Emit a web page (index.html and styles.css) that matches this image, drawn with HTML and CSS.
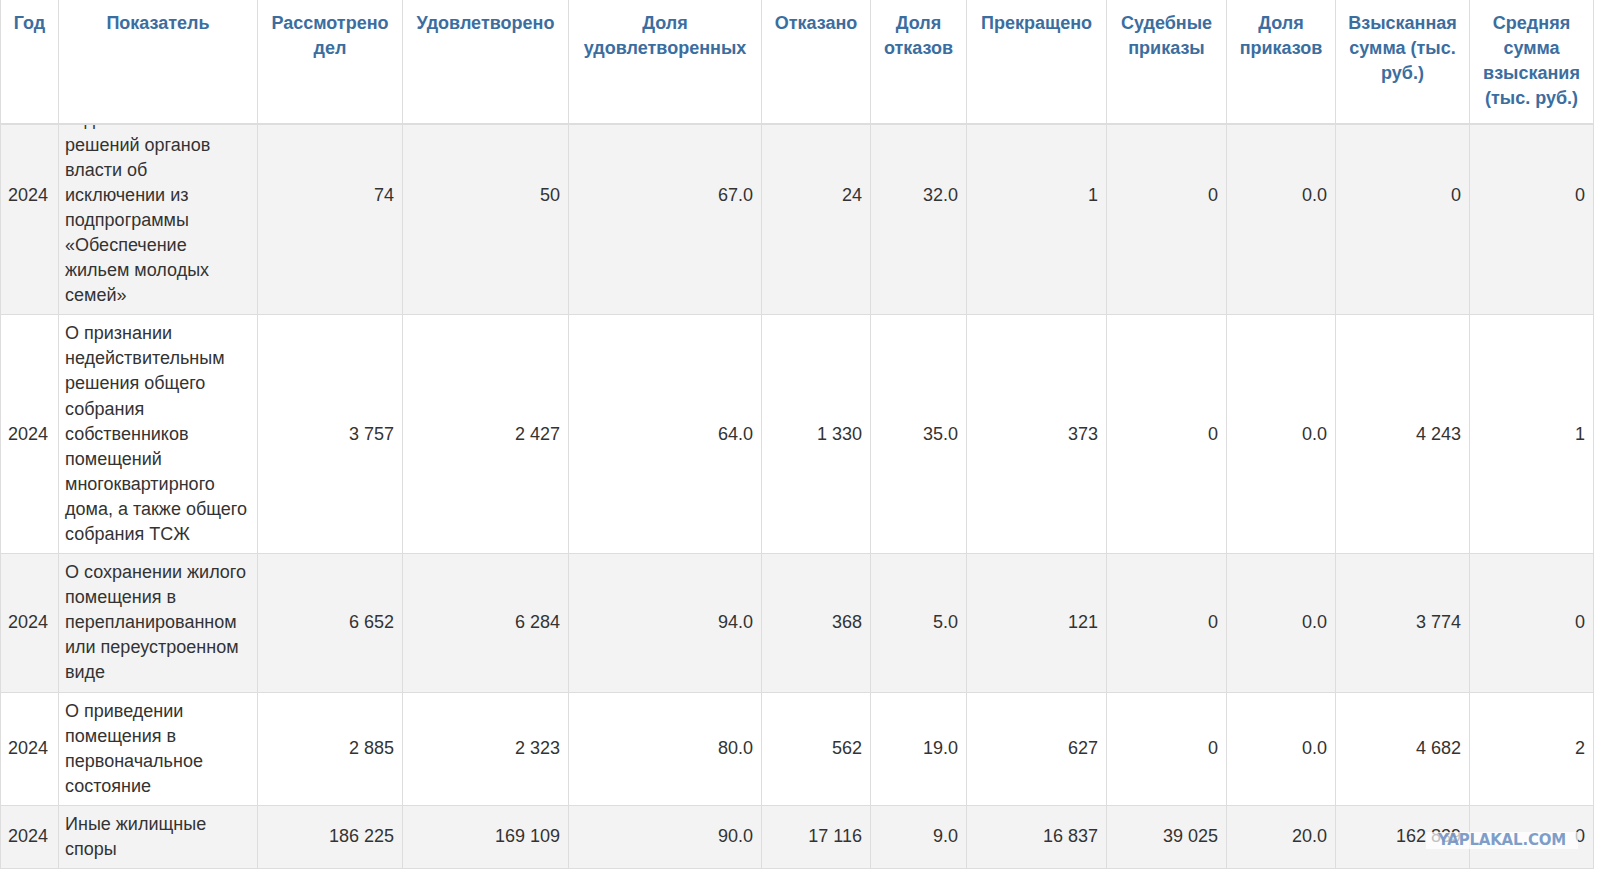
FILE: index.html
```html
<!DOCTYPE html>
<html lang="ru">
<head>
<meta charset="utf-8">
<title>Жилищные споры</title>
<link rel="stylesheet" href="styles.css">
</head>
<body>
<div class="page">
  <table class="grid head">
    <colgroup>
      <col class="c1"><col class="c2"><col class="c3"><col class="c4"><col class="c5"><col class="c6">
      <col class="c7"><col class="c8"><col class="c9"><col class="c10"><col class="c11"><col class="c12">
    </colgroup>
    <thead>
      <tr>
        <th>Год</th>
        <th>Показатель</th>
        <th>Рассмотрено дел</th>
        <th>Удовлетворено</th>
        <th>Доля удовлетворенных</th>
        <th>Отказано</th>
        <th>Доля отказов</th>
        <th>Прекращено</th>
        <th>Судебные приказы</th>
        <th>Доля приказов</th>
        <th>Взысканная сумма (тыс. руб.)</th>
        <th>Средняя сумма взыскания (тыс. руб.)</th>
      </tr>
    </thead>
  </table>
  <div class="viewport">
    <table class="grid body">
      <colgroup>
        <col class="c1"><col class="c2"><col class="c3"><col class="c4"><col class="c5"><col class="c6">
        <col class="c7"><col class="c8"><col class="c9"><col class="c10"><col class="c11"><col class="c12">
      </colgroup>
      <tbody>
        <tr>
          <td class="year">2024</td>
          <td class="label">О признании недействительным решений органов власти об исключении из подпрограммы «Обеспечение жильем молодых семей»</td>
          <td>74</td><td>50</td><td>67.0</td><td>24</td><td>32.0</td><td>1</td><td>0</td><td>0.0</td><td>0</td><td>0</td>
        </tr>
        <tr>
          <td class="year">2024</td>
          <td class="label">О признании недействительным решения общего собрания собственников помещений многоквартирного дома, а также общего собрания ТСЖ</td>
          <td>3 757</td><td>2 427</td><td>64.0</td><td>1 330</td><td>35.0</td><td>373</td><td>0</td><td>0.0</td><td>4 243</td><td>1</td>
        </tr>
        <tr>
          <td class="year">2024</td>
          <td class="label">О сохранении жилого помещения в перепланированном или переустроенном виде</td>
          <td>6 652</td><td>6 284</td><td>94.0</td><td>368</td><td>5.0</td><td>121</td><td>0</td><td>0.0</td><td>3 774</td><td>0</td>
        </tr>
        <tr>
          <td class="year">2024</td>
          <td class="label">О приведении помещения в первоначальное состояние</td>
          <td>2 885</td><td>2 323</td><td>80.0</td><td>562</td><td>19.0</td><td>627</td><td>0</td><td>0.0</td><td>4 682</td><td>2</td>
        </tr>
        <tr>
          <td class="year">2024</td>
          <td class="label">Иные жилищные споры</td>
          <td>186 225</td><td>169 109</td><td>90.0</td><td>17 116</td><td>9.0</td><td>16 837</td><td>39 025</td><td>20.0</td><td>162 839</td><td>0</td>
        </tr>
      </tbody>
    </table>
  </div>
  <div class="watermark">YAPLAKAL.COM</div>
</div>
</body>
</html>
```

FILE: styles.css
```css
html, body {
  margin: 0;
  padding: 0;
  background: #ffffff;
}

body {
  font-family: "Liberation Sans", Arial, sans-serif;
  font-size: 18px;
  line-height: 25.1px;
  color: #333333;
}

.page {
  position: relative;
  width: 1597px;
  height: 871px;
  overflow: hidden;
}

.grid {
  table-layout: fixed;
  border-collapse: collapse;
  width: 1593px;
}

.c1 { width: 58px; }
.c2 { width: 199px; }
.c3 { width: 145px; }
.c4 { width: 166px; }
.c5 { width: 193px; }
.c6 { width: 109px; }
.c7 { width: 96px; }
.c8 { width: 140px; }
.c9 { width: 120px; }
.c10 { width: 109px; }
.c11 { width: 134px; }
.c12 { width: 124px; }

.head th {
  height: 98px;
  padding: 11px 7px 12px;
  border-left: 1px solid #dddddd;
  border-right: 1px solid #dddddd;
  border-bottom: 2px solid #dddddd;
  color: #3b6e9f;
  font-weight: bold;
  text-align: center;
  vertical-align: top;
}

.viewport {
  height: 748px;
  overflow: hidden;
}

.body {
  margin-top: -50px;
}

.body td {
  padding: 6px 8px;
  border: 1px solid #dddddd;
  text-align: right;
  vertical-align: middle;
}

.body tr:nth-child(odd) td {
  background: #f3f3f3;
}

.body td.year {
  text-align: left;
  padding-left: 7px;
  padding-right: 4px;
}

.body td.label {
  text-align: left;
  padding-left: 6px;
  padding-right: 6px;
}

.watermark {
  position: absolute;
  left: 1426px;
  top: 832px;
  width: 152px;
  height: 17px;
  background: rgba(255, 255, 255, 0.7);
  color: rgba(105, 140, 192, 0.85);
  font-family: "DejaVu Sans", sans-serif;
  font-weight: bold;
  font-size: 15px;
  line-height: 17px;
  text-align: center;
  letter-spacing: -0.2px;
}
```
